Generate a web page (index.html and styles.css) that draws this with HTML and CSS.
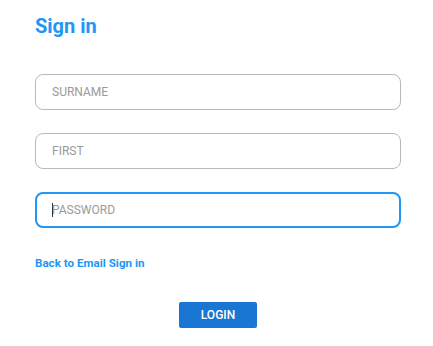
FILE: index.html
```html
<!DOCTYPE html>
<html lang="en">
<head>
  <meta charset="UTF-8">
  <meta name="viewport" content="width=device-width, initial-scale=1.0">
  <title>Sign in</title>
  <link rel="stylesheet" href="styles.css">
</head>
<body>
  <!-- Sign in form -->
  <main class="signin">
    <h1 class="signin-title">Sign in</h1>
    <form class="signin-form">
      <input class="field" type="text" placeholder="SURNAME">
      <input class="field" type="text" placeholder="FIRST">
      <div class="field-wrap">
        <input class="field field-active" type="password" placeholder="PASSWORD">
        <span class="caret"></span>
      </div>
      <a class="back-link" href="#">Back to Email Sign in</a>
      <div class="actions">
        <button class="login-btn" type="button">LOGIN</button>
      </div>
    </form>
  </main>
</body>
</html>
```

FILE: styles.css
```css
/* Global Styles */
* {
  margin: 0;
  padding: 0;
  box-sizing: border-box;
  font-family: Roboto, 'Liberation Sans', sans-serif;
}

body {
  background-color: #fff;
  color: #333;
}

/* Sign in block */
.signin {
  width: 366px;
  margin-left: 35px;
  padding-top: 14px;
}

.signin-title {
  color: #2196f3;
  font-size: 20px;
  font-weight: 700;
  line-height: 24px;
}

.signin-form {
  display: flex;
  flex-direction: column;
  margin-top: 36px;
}

.field {
  height: 36px;
  width: 100%;
  border: 1px solid #b8b8b8;
  border-radius: 8px;
  padding: 0 16px;
  font-size: 12px;
  color: #333;
  outline: none;
  margin-bottom: 23px;
  background: #fff;
}

.field::placeholder {
  color: #9a9a9a;
}

.field-active {
  border: 2px solid #2196f3;
  padding: 0 15px;
}

/* fake text cursor shown in the focused field */
.field-wrap {
  position: relative;
}

.caret {
  position: absolute;
  left: 17px;
  top: 11px;
  width: 1px;
  height: 14px;
  background: #333;
}

.back-link {
  color: #2196f3;
  font-size: 11.6px;
  font-weight: 700;
  text-decoration: none;
  line-height: 14px;
  margin-top: 5px;
}

.actions {
  display: flex;
  justify-content: center;
  margin-top: 32px;
}

.login-btn {
  width: 78px;
  height: 26px;
  background-color: #1976d2;
  color: #fff;
  border: none;
  border-radius: 2px;
  font-size: 12px;
  font-weight: 500;
  cursor: pointer;
}
```
